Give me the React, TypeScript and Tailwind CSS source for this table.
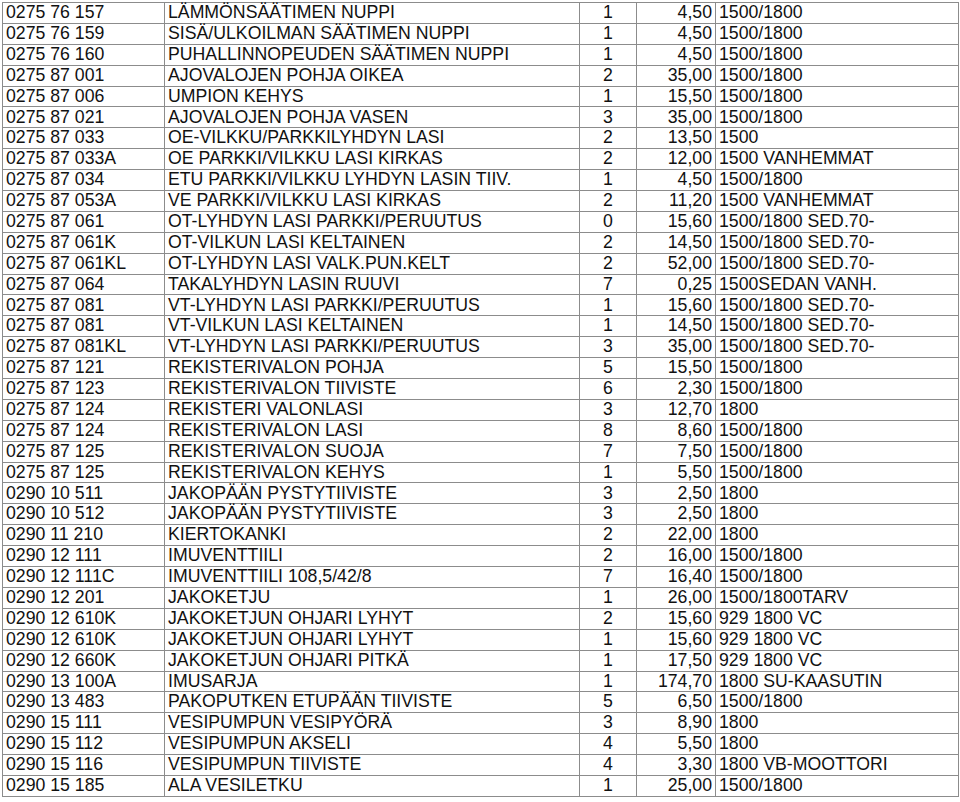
const rows: [string, string, string, string, string][] = [
  ["0275 76 157", "LÄMMÖNSÄÄTIMEN NUPPI", "1", "4,50", "1500/1800"],
  ["0275 76 159", "SISÄ/ULKOILMAN SÄÄTIMEN NUPPI", "1", "4,50", "1500/1800"],
  ["0275 76 160", "PUHALLINNOPEUDEN SÄÄTIMEN NUPPI", "1", "4,50", "1500/1800"],
  ["0275 87 001", "AJOVALOJEN POHJA OIKEA", "2", "35,00", "1500/1800"],
  ["0275 87 006", "UMPION KEHYS", "1", "15,50", "1500/1800"],
  ["0275 87 021", "AJOVALOJEN POHJA VASEN", "3", "35,00", "1500/1800"],
  ["0275 87 033", "OE-VILKKU/PARKKILYHDYN LASI", "2", "13,50", "1500"],
  ["0275 87 033A", "OE PARKKI/VILKKU LASI KIRKAS", "2", "12,00", "1500 VANHEMMAT"],
  ["0275 87 034", "ETU PARKKI/VILKKU LYHDYN LASIN TIIV.", "1", "4,50", "1500/1800"],
  ["0275 87 053A", "VE PARKKI/VILKKU LASI KIRKAS", "2", "11,20", "1500 VANHEMMAT"],
  ["0275 87 061", "OT-LYHDYN LASI PARKKI/PERUUTUS", "0", "15,60", "1500/1800 SED.70-"],
  ["0275 87 061K", "OT-VILKUN LASI KELTAINEN", "2", "14,50", "1500/1800 SED.70-"],
  ["0275 87 061KL", "OT-LYHDYN LASI VALK.PUN.KELT", "2", "52,00", "1500/1800 SED.70-"],
  ["0275 87 064", "TAKALYHDYN LASIN RUUVI", "7", "0,25", "1500SEDAN VANH."],
  ["0275 87 081", "VT-LYHDYN LASI PARKKI/PERUUTUS", "1", "15,60", "1500/1800 SED.70-"],
  ["0275 87 081", "VT-VILKUN LASI KELTAINEN", "1", "14,50", "1500/1800 SED.70-"],
  ["0275 87 081KL", "VT-LYHDYN LASI PARKKI/PERUUTUS", "3", "35,00", "1500/1800 SED.70-"],
  ["0275 87 121", "REKISTERIVALON POHJA", "5", "15,50", "1500/1800"],
  ["0275 87 123", "REKISTERIVALON TIIVISTE", "6", "2,30", "1500/1800"],
  ["0275 87 124", "REKISTERI VALONLASI", "3", "12,70", "1800"],
  ["0275 87 124", "REKISTERIVALON LASI", "8", "8,60", "1500/1800"],
  ["0275 87 125", "REKISTERIVALON SUOJA", "7", "7,50", "1500/1800"],
  ["0275 87 125", "REKISTERIVALON KEHYS", "1", "5,50", "1500/1800"],
  ["0290 10 511", "JAKOPÄÄN PYSTYTIIVISTE", "3", "2,50", "1800"],
  ["0290 10 512", "JAKOPÄÄN PYSTYTIIVISTE", "3", "2,50", "1800"],
  ["0290 11 210", "KIERTOKANKI", "2", "22,00", "1800"],
  ["0290 12 111", "IMUVENTTIILI", "2", "16,00", "1500/1800"],
  ["0290 12 111C", "IMUVENTTIILI 108,5/42/8", "7", "16,40", "1500/1800"],
  ["0290 12 201", "JAKOKETJU", "1", "26,00", "1500/1800TARV"],
  ["0290 12 610K", "JAKOKETJUN OHJARI LYHYT", "2", "15,60", "929 1800 VC"],
  ["0290 12 610K", "JAKOKETJUN OHJARI LYHYT", "1", "15,60", "929 1800 VC"],
  ["0290 12 660K", "JAKOKETJUN OHJARI PITKÄ", "1", "17,50", "929 1800 VC"],
  ["0290 13 100A", "IMUSARJA", "1", "174,70", "1800 SU-KAASUTIN"],
  ["0290 13 483", "PAKOPUTKEN ETUPÄÄN TIIVISTE", "5", "6,50", "1500/1800"],
  ["0290 15 111", "VESIPUMPUN VESIPYÖRÄ", "3", "8,90", "1800"],
  ["0290 15 112", "VESIPUMPUN AKSELI", "4", "5,50", "1800"],
  ["0290 15 116", "VESIPUMPUN TIIVISTE", "4", "3,30", "1800 VB-MOOTTORI"],
  ["0290 15 185", "ALA VESILETKU", "1", "25,00", "1500/1800"],
];

const PartsTable = () => {
  return (
    <div className="pt-[2px] pl-[2px]">
      <div className="w-[957px] border-t border-l border-[#8c8c8c] text-[17.7px] leading-none text-[#111] font-['Liberation_Sans',Arial,sans-serif]">
        {rows.map(([code, name, qty, price, note], i) => (
          <div
            key={i}
            className="grid h-[20.9px] grid-cols-[162px_415px_57px_79px_1fr] border-b border-[#8c8c8c]"
          >
            <div className="flex items-center border-r border-[#8c8c8c] pl-[3px] whitespace-nowrap">{code}</div>
            <div className="flex items-center border-r border-[#8c8c8c] pl-[3px] whitespace-nowrap">{name}</div>
            <div className="flex items-center justify-center border-r border-[#8c8c8c] whitespace-nowrap">{qty}</div>
            <div className="flex items-center justify-end border-r border-[#8c8c8c] pr-[3px] whitespace-nowrap">{price}</div>
            <div className="flex items-center border-r border-[#8c8c8c] pl-[3px] whitespace-nowrap">{note}</div>
          </div>
        ))}
      </div>
    </div>
  );
};

export default function App() {
  return (
    <div className="min-h-screen bg-white">
      <PartsTable />
    </div>
  );
}
